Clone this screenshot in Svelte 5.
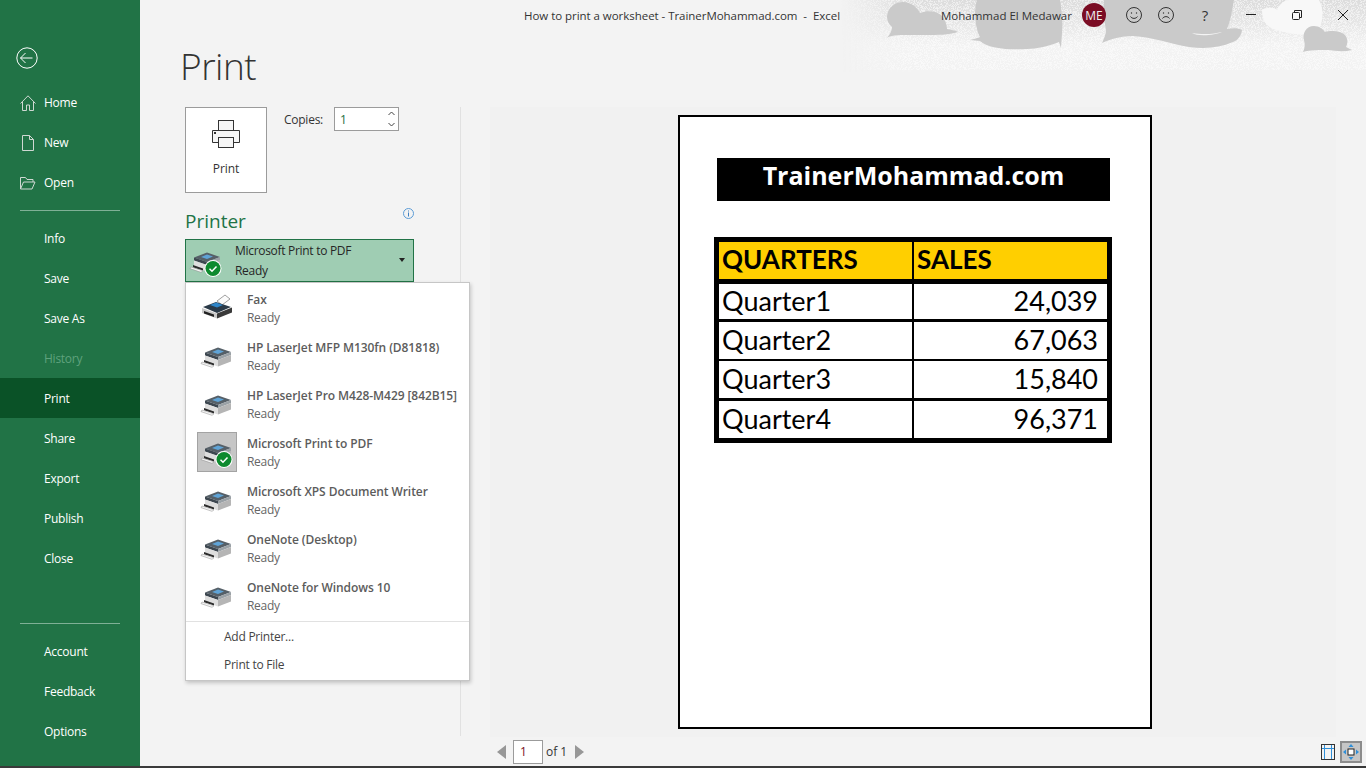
<script>
  const topNav = [
    { label: 'Home', icon: 'home' },
    { label: 'New', icon: 'new' },
    { label: 'Open', icon: 'open' }
  ];
  const midNav = ['Info', 'Save', 'Save As', 'History', 'Print', 'Share', 'Export', 'Publish', 'Close'];
  const bottomNav = ['Account', 'Feedback', 'Options'];

  const printers = [
    { name: 'Fax', kind: 'fax' },
    { name: 'HP LaserJet MFP M130fn (D81818)', kind: 'printer' },
    { name: 'HP LaserJet Pro M428-M429 [842B15]', kind: 'printer' },
    { name: 'Microsoft Print to PDF', kind: 'printer', selected: true },
    { name: 'Microsoft XPS Document Writer', kind: 'printer' },
    { name: 'OneNote (Desktop)', kind: 'printer' },
    { name: 'OneNote for Windows 10', kind: 'printer' }
  ];

  const quarters = [
    { name: 'Quarter1', sales: '24,039' },
    { name: 'Quarter2', sales: '67,063' },
    { name: 'Quarter3', sales: '15,840' },
    { name: 'Quarter4', sales: '96,371' }
  ];
</script>

{#snippet printerIcon(kind, check)}
  <svg class="printer-icon" width="40" height="32" viewBox="0 0 40 32">
    {#if kind === 'fax'}
      <path d="M20 9l8-6 5 4-8 6z" fill="#fbfbfb" stroke="#777" stroke-width=".7"/>
      <path d="M6 15l13-5 15 5-14 6z" fill="#2b3a48"/>
      <path d="M13 13l6-2.500 7 2.500-6 2.600z" fill="#2f86c9"/>
      <path d="M5 16l15 5.500v5L5 21z" fill="#c9c9c9"/>
      <path d="M20 21.500L35 15.500v5L20 26.500z" fill="#3a3a3a"/>
      <path d="M7 19l10 3.600v2.400L7 21.500z" fill="#222"/>
    {:else}
      <path d="M8 12.500l13-5 13 4.500-13 5z" fill="#566068"/>
      <path d="M15 12l6-2.400 6 2-6 2.400z" fill="#5fa3d6"/>
      <path d="M8 12.500l13 4.500v3L8 15.500z" fill="#3d4750"/>
      <path d="M21 17l13-5v3l-13 5z" fill="#9aa1a6"/>
      <path d="M8 15.500L21 20v6.500L8 22z" fill="#dedede"/>
      <path d="M21 20l13-5v6.500l-13 5z" fill="#b5b5b5"/>
      <path d="M7 20l10 3.400v2.200L7 22.200z" fill="#2c2c2c"/>
      <path d="M5 22l12 3.800-2 1.500L4 23.600z" fill="#f7f7f7" stroke="#8a8a8a" stroke-width=".5"/>
    {/if}
    {#if check}
      <circle cx="27" cy="23.500" r="8.500" fill="#fff"/>
      <circle cx="27" cy="23.500" r="7.500" fill="#0d8a2e"/>
      <path d="M23.500 23.700l2.500 2.500 4.500-4.700" fill="none" stroke="#fff" stroke-width="1.500"/>
    {/if}
  </svg>
{/snippet}

<div class="window">
  <aside class="sidebar">
    <button class="back" aria-label="Back">
      <svg width="24" height="24" viewBox="0 0 24 24" fill="none" stroke="#fff" stroke-width="1">
        <circle cx="12" cy="12" r="10.200"/>
        <path d="M5.500 12h12M10.500 7l-5 5 5 5"/>
      </svg>
    </button>

    <nav class="nav-group">
      {#each topNav as item}
        <div class="nav-item">
          <svg class="nav-icon" width="16" height="16" viewBox="0 0 16 16" fill="none" stroke="#cfd8d2" stroke-width="1">
            {#if item.icon === 'home'}
              <path d="M.5 8.500L8 .8l7.500 7.700M2.500 7v8.500h4V10h3v5.500h4V7"/>
            {:else if item.icon === 'new'}
              <path d="M2.500.5h7l4 4v11h-11zM9.500.5v4h4"/>
            {:else}
              <path d="M.5 14V2.500h5l1.500 2h6V7M.5 14l3-7h11.500l-3 7z"/>
            {/if}
          </svg>
          <span>{item.label}</span>
        </div>
      {/each}
    </nav>
    <div class="nav-rule"></div>
    <nav class="nav-group mid">
      {#each midNav as label}
        <div class="nav-item" class:active={label === 'Print'} class:disabled={label === 'History'}>
          <span>{label}</span>
        </div>
      {/each}
    </nav>
    <div class="nav-rule lower"></div>
    <nav class="nav-group bottom">
      {#each bottomNav as label}
        <div class="nav-item"><span>{label}</span></div>
      {/each}
    </nav>
  </aside>

  <main class="main">
    <!-- title bar artwork, coordinates are window x -->
    <svg class="clouds" width="526" height="72" viewBox="840 0 526 72">
      <defs>
        <filter id="grain" x="0" y="0" width="100%" height="100%" color-interpolation-filters="sRGB">
          <feTurbulence type="fractalNoise" baseFrequency="1.300" numOctaves="2" seed="4"/>
          <feColorMatrix values="0 0 0 0 1 0 0 0 0 1 0 0 0 0 1 0 0 0 9 -4.300"/>
        </filter>
        <linearGradient id="tone" x1="0" y1="0" x2="0" y2="1">
          <stop offset="0" stop-color="#dcdcdc"/>
          <stop offset=".32" stop-color="#e6e6e6"/>
          <stop offset=".62" stop-color="#f3f3f3"/>
          <stop offset="1" stop-color="#f3f3f3"/>
        </linearGradient>
        <linearGradient id="side" x1="0" y1="0" x2="1" y2="0">
          <stop offset="0" stop-color="#000"/>
          <stop offset=".14" stop-color="#fff"/>
        </linearGradient>
        <mask id="sideMask"><rect x="840" width="526" height="72" fill="url(#side)"/></mask>
      </defs>
      <g mask="url(#sideMask)">
        <rect x="840" width="526" height="72" fill="url(#tone)"/>
        <rect x="840" width="526" height="70" filter="url(#grain)" opacity=".55"/>
      </g>
      <path d="M1262 10c4-3 12-3 15 0 2-6 8-10 12-10h30c5 8 5 24-3 34-10 2-26 0-40-4-8-2-14-8-14-20z" fill="#f8f8f8"/>
      <g fill="#cacaca">
        <path d="M887 17c0-9 8-15 16-15 8 0 14 5 17 11 8-3 16-2 21 2 4 4 6 10 6 14 4 1 8 1 11 3-10 3-20 3-32 3-18 0-36-1-39 3 3-4 5-7 5-11-3-3-5-6-5-10z"/>
        <path d="M977 0h83c2 12 3 24 2 33l-1 15-2-6c-10 4-22 7-32 7-18 1-38 0-47-8l-10-1c4-1 8-2 10-3-4-7-7-24-3-37z"/>
        <path d="M1084 0h150c-2 10-3 20-7 29 5-1 12-1 15 1-1 6-4 10-9 12-14 6-28 7-44 5-18-3-36-10-56-11-12 0-22 3-31 7 2-4 4-9 4-13-2-10-3-20-2-30z"/>
        <path d="M1304 40c-2-6 2-14 10-14 5 0 9 3 11 6 6-2 16-1 20 3 3 4 3 8 1 12l6 3c-8 2-16 1-24 0-8 0-18 0-25 2 2-4 2-8 1-12z"/>
      </g>
      <path d="M1192 33c12 2 22 1 30-1-6 3-24 5-30 1z" fill="#f4f4f4"/>
    </svg>

    <header class="titlebar">
      <span class="doc-title">How to print a worksheet - TrainerMohammad.com&nbsp; -&nbsp; Excel</span>
      <span class="user-name">Mohammad El Medawar</span>
      <span class="avatar">ME</span>
      <svg class="tb-icon smile" width="16" height="16" viewBox="0 0 16 16" fill="none" stroke="#333" stroke-width="1">
        <circle cx="8" cy="8" r="7.500"/>
        <circle cx="5.500" cy="6" r=".7" fill="#333" stroke="none"/>
        <circle cx="10.500" cy="6" r=".7" fill="#333" stroke="none"/>
        <path d="M4.500 9.500c1.500 2.500 5.500 2.500 7 0"/>
      </svg>
      <svg class="tb-icon frown" width="16" height="16" viewBox="0 0 16 16" fill="none" stroke="#333" stroke-width="1">
        <circle cx="8" cy="8" r="7.500"/>
        <circle cx="5.500" cy="6" r=".7" fill="#333" stroke="none"/>
        <circle cx="10.500" cy="6" r=".7" fill="#333" stroke="none"/>
        <path d="M4.500 11.500c1.500-2.500 5.500-2.500 7 0"/>
      </svg>
      <span class="help">?</span>
      <svg class="win-btn min" width="10" height="10" viewBox="0 0 10 10" stroke="#222" stroke-width="1">
        <path d="M0 4.500h10"/>
      </svg>
      <svg class="win-btn restore" width="10" height="10" viewBox="0 0 10 10" fill="none" stroke="#222" stroke-width="1">
        <path d="M2.500 2V.5h7v7H8"/>
        <rect x=".5" y="2.500" width="7" height="7" rx="1"/>
      </svg>
      <svg class="win-btn close" width="10" height="10" viewBox="0 0 10 10" stroke="#222" stroke-width="1">
        <path d="M0 0l10 10M10 0L0 10"/>
      </svg>
    </header>

    <h1 class="page-title">Print</h1>

    <div class="content">
      <section class="settings">
        <div class="print-row">
          <button class="print-btn">
            <svg width="30" height="30" viewBox="0 0 30 30" fill="#f6f6f6" stroke="#333" stroke-width="1">
              <rect x="7.500" y="1.500" width="15" height="10"/>
              <path d="M1.500 11.500h27v12h-27z"/>
              <rect x="7.500" y="18.500" width="15" height="10"/>
              <rect x="3.500" y="13.500" width="1" height="1" fill="#333"/>
            </svg>
            <span>Print</span>
          </button>
          <span class="copies-label">Copies:</span>
          <div class="copies-input">
            <span>1</span>
            <svg width="9" height="20" viewBox="0 0 9 20" fill="none" stroke="#444" stroke-width="1">
              <path d="M1.500 6l3-3 3 3M1.500 14l3 3 3-3"/>
            </svg>
          </div>
        </div>

        <div class="printer-head">
          <h2>Printer</h2>
          <svg width="11" height="11" viewBox="0 0 11 11" fill="none" stroke="#5b9bd5" stroke-width="1">
            <circle cx="5.500" cy="5.500" r="5"/>
            <path d="M5.500 4.500v4M5.500 2.500v1" stroke="#3f7fbf"/>
          </svg>
        </div>

        <div class="printer-select">
          {@render printerIcon('printer', true)}
          <div class="select-text">
            <span>Microsoft Print to PDF</span>
            <span>Ready</span>
          </div>
          <span class="caret"></span>
        </div>

        <div class="printer-menu">
          {#each printers as p}
            <div class="menu-printer">
              <div class="icon-box" class:selected={p.selected}>
                {@render printerIcon(p.kind, p.selected)}
              </div>
              <div class="menu-text">
                <strong>{p.name}</strong>
                <span>Ready</span>
              </div>
            </div>
          {/each}
          <div class="menu-sep"></div>
          <div class="menu-action">Add Printer...</div>
          <div class="menu-action">Print to File</div>
        </div>
      </section>

      <section class="preview">
        <div class="stage">
          <div class="sheet">
            <div class="sheet-title">TrainerMohammad.com</div>
            <div class="sheet-table">
              <div class="cell head">QUARTERS</div>
              <div class="cell head">SALES</div>
              {#each quarters as q}
                <div class="cell">{q.name}</div>
                <div class="cell num">{q.sales}</div>
              {/each}
            </div>
          </div>
        </div>
        <footer class="pager">
          <span class="arrow left"></span>
          <div class="page-input">1</div>
          <span class="page-of">of 1</span>
          <span class="arrow right"></span>
          <svg class="margins" width="14" height="16" viewBox="0 0 14 16" fill="none">
            <rect x=".5" y=".5" width="13" height="15" stroke="#333"/>
            <path d="M3.500 1v14M10.500 1v14M1 4.500h12" stroke="#2f8fd8"/>
          </svg>
          <div class="zoom-page">
            <svg width="16" height="16" viewBox="0 0 16 16">
              <rect x="5" y="5" width="6" height="6" fill="#fff" stroke="#222"/>
              <path d="M8 0l2.500 3h-5zM8 16l2.500-3h-5zM0 8l3-2.500v5zM16 8l-3-2.500v5z" fill="#2f8fd8"/>
            </svg>
          </div>
        </footer>
      </section>
    </div>
  </main>
</div>

<style>
  :global(body) {
    margin: 0;
    background: #f3f3f3;
  }

  .window {
    display: flex;
    width: 1366px;
    height: 766px;
    overflow: hidden;
    box-sizing: content-box;
    border-bottom: 2px solid #3a3a3a;
    font-family: "Open Sans", "Noto Sans", sans-serif;
    font-size: 12px;
    color: #333;
  }

  /* sidebar */
  .sidebar {
    width: 140px;
    flex-shrink: 0;
    background: #217346;
    color: #fff;
    display: flex;
    flex-direction: column;
    padding-top: 46px;
    box-sizing: border-box;
  }

  .back {
    width: 24px;
    height: 24px;
    padding: 0;
    margin: 0 0 12px 15px;
    background: none;
    border: none;
    display: block;
  }

  .back svg {
    display: block;
  }

  .nav-group {
    display: flex;
    flex-direction: column;
  }

  .nav-item {
    height: 40px;
    display: flex;
    align-items: center;
    padding-left: 44px;
    position: relative;
    font-size: 12px;
    letter-spacing: -0.25px;
  }

  .nav-icon {
    position: absolute;
    left: 20px;
    top: 13px;
  }

  .nav-item.active {
    background: #0a5227;
  }

  .nav-item.disabled {
    color: #5fa27d;
  }

  .nav-rule {
    height: 1px;
    background: #7fb096;
    margin: 8px 20px 7px;
  }

  .nav-rule.lower {
    margin: 45px 20px 7px;
  }

  /* main */
  .main {
    flex: 1;
    min-width: 0;
    position: relative;
    display: flex;
    flex-direction: column;
  }

  .clouds {
    position: absolute;
    top: 0;
    right: 0;
    pointer-events: none;
  }

  .titlebar {
    position: relative;
    height: 30px;
    display: flex;
    align-items: center;
    font-size: 11.500px;
    color: #333;
  }

  .doc-title {
    margin-left: 384px;
    width: 417px;
    white-space: nowrap;
    letter-spacing: -0.04px;
  }

  .user-name {
    width: 141px;
    white-space: nowrap;
  }

  .avatar {
    width: 24px;
    height: 24px;
    border-radius: 50%;
    background: #7b0d24;
    color: #eee;
    display: flex;
    align-items: center;
    justify-content: center;
    font-size: 12px;
  }

  .tb-icon {
    margin-left: 20px;
  }

  .tb-icon.frown {
    margin-left: 16px;
  }

  .help {
    margin-left: 26px;
    width: 10px;
    font-size: 15px;
    text-align: center;
  }

  .win-btn.min {
    margin-left: 36px;
  }

  .win-btn.restore,
  .win-btn.close {
    margin-left: 36px;
  }

  .page-title {
    margin: 9px 0 0 40px;
    height: 68px;
    font-family: "Open Sans", sans-serif;
    font-weight: 300;
    font-size: 37px;
    line-height: 53px;
    color: #333;
    letter-spacing: -0.5px;
    position: relative;
  }

  .content {
    flex: 1;
    min-height: 0;
    display: flex;
  }

  /* left column */
  .settings {
    position: relative;
    width: 321px;
    margin-bottom: 30px;
    padding-left: 45px;
    box-sizing: border-box;
    border-right: 1px solid #e1e1e1;
  }

  .print-row {
    display: flex;
    align-items: flex-start;
  }

  .print-btn {
    width: 82px;
    height: 86px;
    box-sizing: border-box;
    background: #fff;
    border: 1px solid #9b9b9b;
    padding: 11px 0 0;
    display: flex;
    flex-direction: column;
    align-items: center;
    gap: 11px;
    font: inherit;
    color: #333;
    letter-spacing: -0.1px;
  }

  .copies-label {
    margin: 4px 0 0 17px;
    width: 50px;
    letter-spacing: -0.25px;
  }

  .copies-input {
    width: 65px;
    height: 24px;
    box-sizing: border-box;
    background: #fff;
    border: 1px solid #9b9b9b;
    display: flex;
    align-items: center;
    justify-content: space-between;
    padding: 0 2px 0 5px;
    color: #1d6f42;
  }

  .printer-head {
    display: flex;
    align-items: flex-start;
    height: 32px;
    margin-top: 14px;
    width: 229px;
    justify-content: space-between;
  }

  .printer-head h2 {
    margin: 0;
    font-weight: 400;
    font-size: 19px;
    line-height: 29px;
    color: #217346;
  }

  .printer-head svg {
    margin-top: 1px;
  }

  .printer-select {
    width: 229px;
    height: 43px;
    box-sizing: border-box;
    background: #9fcdb3;
    border: 1px solid #217346;
    display: flex;
    align-items: center;
    position: relative;
  }

  .printer-select .printer-icon {
    margin: 0 4px 0 0;
    flex-shrink: 0;
  }

  .select-text {
    display: flex;
    flex-direction: column;
    gap: 3px;
    margin-left: 5px;
    line-height: 17px;
    color: #262626;
    letter-spacing: -0.3px;
  }

  .caret {
    position: absolute;
    right: 8px;
    top: 18px;
    border: 3.500px solid transparent;
    border-top: 4px solid #222;
  }

  .printer-menu {
    position: absolute;
    left: 45px;
    top: 175px;
    width: 285px;
    height: 399px;
    box-sizing: border-box;
    padding-top: 1px;
    background: #fff;
    border: 1px solid #c6c6c6;
    box-shadow: 1px 2px 4px rgba(0, 0, 0, 0.2);
    z-index: 2;
  }

  .menu-printer {
    height: 48px;
    display: flex;
    align-items: center;
    padding-left: 11px;
  }

  .icon-box {
    width: 40px;
    height: 40px;
    box-sizing: border-box;
    display: flex;
    align-items: center;
    justify-content: center;
    margin-right: 10px;
    border: 1px solid transparent;
  }

  .icon-box.selected {
    background: #c6c6c6;
    border-color: #a3a3a3;
  }

  .icon-box .printer-icon {
    flex-shrink: 0;
  }

  .menu-text {
    display: flex;
    flex-direction: column;
    line-height: 17.500px;
    padding-top: 1px;
    color: #666;
    letter-spacing: -0.3px;
  }

  .menu-text strong {
    font-weight: 600;
    color: #5c5c5c;
    white-space: nowrap;
    letter-spacing: -0.08px;
  }

  .menu-sep {
    height: 1px;
    background: #e1e1e1;
    margin: 1px 0;
  }

  .menu-action {
    height: 28px;
    line-height: 28px;
    padding-left: 38px;
    color: #444;
    letter-spacing: -0.25px;
  }

  /* preview */
  .preview {
    flex: 1;
    min-width: 0;
    display: flex;
    flex-direction: column;
    padding: 0 30px 0 29px;
  }

  .stage {
    height: 630px;
    background: #f1f1f1;
    padding-top: 8px;
    box-sizing: border-box;
  }

  .sheet {
    width: 474px;
    height: 614px;
    margin-left: 188px;
    box-sizing: border-box;
    background: #fff;
    border: 2px solid #000;
    padding-top: 41px;
  }

  .sheet-title {
    width: 393px;
    height: 43px;
    margin-left: 37px;
    background: #000;
    color: #fff;
    font-family: "Open Sans", sans-serif;
    font-weight: 700;
    font-size: 25px;
    line-height: 35px;
    text-align: center;
  }

  .sheet-table {
    width: 398px;
    margin: 36px 0 0 34px;
    box-sizing: border-box;
    padding: 5px;
    background: #000;
    display: grid;
    grid-template-columns: 193px 193px;
    grid-template-rows: 37px 40px 40px 39px 40px;
    column-gap: 2px;
    font-family: Lato, sans-serif;
    font-size: 27px;
    color: #000;
  }

  .cell {
    background: #fff;
    padding: 0 9px 2px 3px;
    display: flex;
    align-items: center;
    border-top: 3px solid #000;
  }

  .cell.head {
    background: #ffcf00;
    font-weight: 700;
    font-size: 26px;
    border-top: none;
    padding-bottom: 4px;
  }

  /* row rules in the sheet are not all the same weight */
  .cell:nth-child(3),
  .cell:nth-child(4) {
    border-top-width: 5px;
  }

  .cell:nth-child(7),
  .cell:nth-child(8) {
    border-top-width: 2px;
  }

  .cell.num {
    justify-content: flex-end;
  }

  .pager {
    flex: 1;
    position: relative;
    display: flex;
    align-items: center;
    padding-left: 7px;
  }

  .arrow {
    width: 0;
    height: 0;
    border-top: 7px solid transparent;
    border-bottom: 7px solid transparent;
  }

  .arrow.left {
    border-right: 9px solid #979797;
    margin-right: 7px;
  }

  .arrow.right {
    border-left: 9px solid #979797;
    margin-left: 5px;
  }

  .page-input {
    width: 30px;
    height: 24px;
    box-sizing: border-box;
    background: #fff;
    border: 1px solid #9b9b9b;
    padding-left: 6px;
    line-height: 22px;
    color: #7b0d24;
  }

  .page-of {
    margin-left: 3px;
    width: 24px;
    color: #333;
  }

  .margins {
    margin-left: auto;
    margin-right: 5px;
  }

  .zoom-page {
    width: 22px;
    height: 22px;
    box-sizing: border-box;
    background: #c6c6c6;
    border: 2px solid #8c8c8c;
    display: flex;
    align-items: center;
    justify-content: center;
    margin-right: -26px;
  }
</style>
